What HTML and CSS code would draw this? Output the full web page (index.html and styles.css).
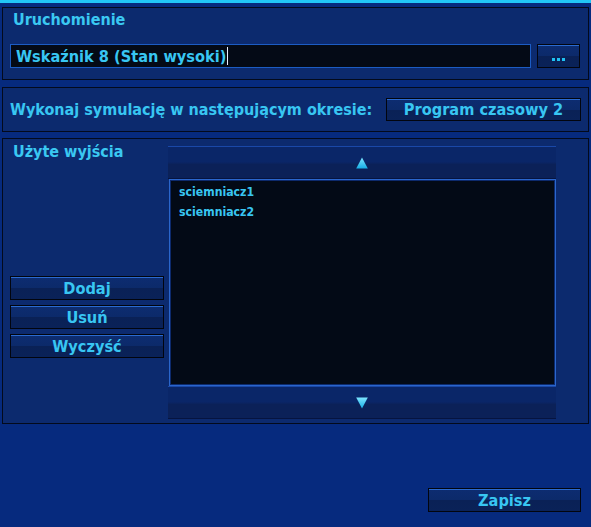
FILE: index.html
```html
<!DOCTYPE html>
<html lang="pl">
<head>
<meta charset="utf-8">
<title>Uruchomienie</title>
<link rel="stylesheet" href="styles.css">
</head>
<body>
<div class="topline"></div>

<section class="panel panel-run">
  <div class="title">Uruchomienie</div>
  <div class="row">
    <div class="input"><span class="value">Wskaźnik 8 (Stan wysoki)</span><span class="caret"></span></div>
    <button class="btn btn-dots" type="button"><span class="dot"></span><span class="dot"></span><span class="dot"></span></button>
  </div>
</section>

<section class="panel panel-period">
  <span class="label">Wykonaj symulację w następującym okresie:</span>
  <button class="btn btn-period" type="button">Program czasowy 2</button>
</section>

<section class="panel panel-outputs">
  <div class="left">
    <div class="title">Użyte wyjścia</div>
    <div class="actions">
      <button class="btn btn-side" type="button">Dodaj</button>
      <button class="btn btn-side" type="button">Usuń</button>
      <button class="btn btn-side" type="button">Wyczyść</button>
    </div>
  </div>
  <div class="right">
    <div class="scrollbar">
      <svg width="12" height="12" viewBox="0 0 12 12"><defs><linearGradient id="gu" x1="0" y1="0" x2="0" y2="1"><stop offset="0" stop-color="#7ee6ff"/><stop offset="1" stop-color="#16aee6"/></linearGradient></defs><polygon points="6,0.5 11.8,11.5 0.2,11.5" fill="url(#gu)"/></svg>
    </div>
    <div class="list">
      <div class="item">sciemniacz1</div>
      <div class="item">sciemniacz2</div>
    </div>
    <div class="scrollbar">
      <svg width="12" height="12" viewBox="0 0 12 12"><defs><linearGradient id="gd" x1="0" y1="0" x2="0" y2="1"><stop offset="0" stop-color="#7ee6ff"/><stop offset="1" stop-color="#16aee6"/></linearGradient></defs><polygon points="0.2,0.5 11.8,0.5 6,11.5" fill="url(#gd)"/></svg>
    </div>
  </div>
</section>

<div class="footer">
  <button class="btn btn-save" type="button">Zapisz</button>
</div>
</body>
</html>
```

FILE: styles.css
```css
html, body {
  margin: 0;
  padding: 0;
}
body {
  width: 591px;
  height: 527px;
  overflow: hidden;
  background: #062a7e;
  font-family: "DejaVu Sans Condensed", "DejaVu Sans", Verdana, sans-serif;
  font-weight: bold;
  color: #38c6f2;
}
.topline {
  height: 3px;
  background: #22c6f6;
}
.panel {
  box-sizing: border-box;
  width: 587px;
  margin-left: 2px;
  border: 1px solid #030a1c;
  background: #0c2a6e;
}
.title {
  font-size: 16px;
  line-height: 18px;
  height: 18px;
  margin-left: 3px;
  color: #3ac8f2;
}
.panel-run {
  margin-top: 4px;
  height: 73px;
  padding: 3px 7px 0 7px;
}
.row {
  display: flex;
  align-items: center;
  margin-top: 15px;
  gap: 6px;
}
.input {
  box-sizing: border-box;
  width: 521px;
  height: 24px;
  border: 1px solid #1c5cc4;
  background: #040a16;
  display: flex;
  align-items: center;
  padding-left: 5px;
  font-size: 16.2px;
}
.caret {
  display: inline-block;
  width: 1px;
  height: 18px;
  background: #e8f0ff;
  margin-left: 1px;
}
.btn {
  box-sizing: border-box;
  border: 1px solid #02050e;
  background: linear-gradient(to bottom, #2a6ad0 0, #2a6ad0 1px, #0d2c70 1px, #0c2a6a 50%, #0a2156 52%, #0a2258 100%);
  color: #38c6f2;
  font-family: "DejaVu Sans Condensed", "DejaVu Sans", Verdana, sans-serif;
  font-weight: bold;
  font-size: 16.2px;
  padding: 0;
  margin: 0;
  display: flex;
  align-items: center;
  justify-content: center;
}
.btn-dots {
  width: 43px;
  height: 24px;
  gap: 2px;
  padding-top: 7px;
}
.dot {
  width: 3px;
  height: 3px;
  background: #1ec2f4;
}
.panel-period {
  margin-top: 7px;
  height: 45px;
  display: flex;
  align-items: center;
  justify-content: space-between;
  padding: 0 7px 0 7px;
}
.label {
  font-size: 16px;
}
.btn-period {
  width: 195px;
  height: 23px;
}
.panel-outputs {
  margin-top: 6px;
  height: 286px;
  display: flex;
  padding: 4px 31px 0 7px;
  gap: 4px;
}
.left {
  width: 154px;
}
.actions {
  margin-top: 115px;
  display: flex;
  flex-direction: column;
  gap: 5px;
}
.btn-side {
  width: 154px;
  height: 24px;
}
.right {
  width: 388px;
  margin-top: 3px;
  display: flex;
  flex-direction: column;
}
.scrollbar {
  height: 33px;
  display: flex;
  align-items: center;
  justify-content: center;
  background: linear-gradient(to bottom, #1a48a8 0, #1a48a8 1px, #0a2668 1px, #0a2668 48%, #0b2158 56%, #0b2158 96%, #061440 96%);
}
.scrollbar svg {
  display: block;
}
.list {
  box-sizing: border-box;
  height: 207px;
  margin-left: 1px;
  border: 1px solid #2a66cc;
  box-shadow: inset 0 0 0 1px #0d2a6c;
  background: #030a16;
  padding: 5px 0 0 9px;
  font-size: 12.2px;
}
.item {
  height: 20px;
  line-height: 15px;
  color: #38c6f2;
}
.footer {
  display: flex;
  justify-content: flex-end;
  padding-right: 10px;
  margin-top: 64px;
}
.btn-save {
  width: 153px;
  height: 24px;
}
```
